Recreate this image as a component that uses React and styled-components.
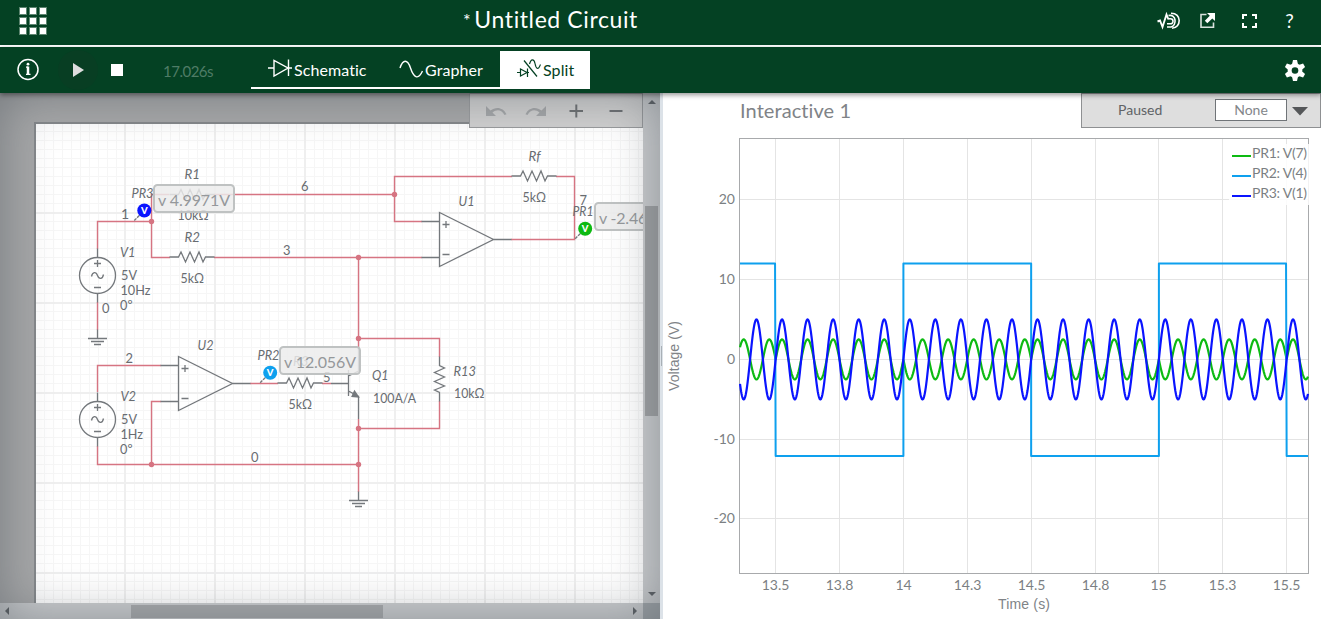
import React from "react";
import styled, { createGlobalStyle } from "styled-components";

const GREEN = "#044123";
const WIRE = "#d67482";
const INK = "#74787c";

const GlobalStyle = createGlobalStyle`
  * { box-sizing: border-box; }
  body { margin: 0; overflow: hidden; font-family: Lato, "Liberation Sans", sans-serif; background: #fff; }
`;

const Page = styled.div`
  width: 1321px;
  height: 619px;
  display: flex;
  flex-direction: column;
  overflow: hidden;
`;

const Header = styled.header`
  flex: 0 0 47px;
  display: grid;
  grid-template-columns: 1fr auto 1fr;
  background: ${GREEN};
  border-bottom: 2px solid #fff;
  color: #fff;
`;

const AppsGrid = styled.div`
  display: grid;
  grid-template-columns: repeat(3, 8px);
  grid-auto-rows: 8px;
  gap: 2px;
  padding: 7px 0 0 19px;
`;

const AppDot = styled.span`
  background: #fff;
  border: 1px solid #5d8570;
`;

const Title = styled.h1`
  margin: 0;
  padding: 5px 220px 0 0;
  font-size: 23px;
  font-weight: 400;
  line-height: 28px;
  letter-spacing: 0.6px;
  white-space: pre;
  justify-self: center;
  display: flex;
  gap: 3px;
`;

const Star = styled.span`
  font-size: 18px;
  line-height: 30px;
`;

const HeaderActions = styled.div`
  display: flex;
  justify-content: flex-end;
  padding: 11px 23px 0 0;
  gap: 16px;
  height: 36px;
`;

const Toolbar = styled.nav`
  flex: 0 0 46px;
  display: flex;
  align-items: stretch;
  background: ${GREEN};
  color: #fff;
  position: relative;
  z-index: 2;
  box-shadow: 0 2px 5px rgba(0, 0, 0, 0.42);
`;

const Controls = styled.div`
  width: 251px;
  display: flex;
  align-items: center;
`;

const Elapsed = styled.span`
  font-size: 15px;
  letter-spacing: -0.5px;
  color: #4f7c66;
  margin-left: 12px;
  padding-top: 1px;
`;

const Tabs = styled.div`
  display: flex;
  margin: 4px 0;
`;

const Tab = styled.button`
  width: ${(p) => p.$width}px;
  padding: 0 0 0 ${(p) => p.$inset}px;
  display: flex;
  align-items: center;
  gap: 2px;
  border: 0;
  border-bottom: 2px solid #fff;
  background: ${(p) => (p.$active ? "#fff" : "transparent")};
  color: ${(p) => (p.$active ? GREEN : "#fff")};
  font: 400 16px/20px Lato, sans-serif;
  letter-spacing: 0.08px;
  span { padding-top: 1px; }
`;

const Settings = styled.div`
  margin-left: auto;
  padding: 12px 14.5px 0 0;
`;

const Main = styled.main`
  flex: 1;
  display: flex;
  min-height: 0;
`;

const SchematicPane = styled.section`
  width: 660px;
  display: grid;
  grid-template-columns: 643px 17px;
  grid-template-rows: 510px 16px;
  background: #a6a7a8;
  position: relative;
  &::after {
    content: "";
    position: absolute;
    inset: 0;
    box-shadow: inset 0 0 50px rgba(62, 70, 78, 0.47);
    pointer-events: none;
  }
`;

const CanvasArea = styled.div`
  position: relative;
  overflow: hidden;
  svg { display: block; }
`;

const CanvasTools = styled.div`
  position: absolute;
  top: 0;
  right: 0;
  width: 174px;
  height: 35px;
  background: #cfcfcf;
  border: 1px solid #999b9d;
  display: flex;
  gap: 16px;
  padding: 5px 0 0 14px;
`;

const VScroll = styled.div`
  background: #cbcdcf;
  display: flex;
  flex-direction: column;
  align-items: center;
  justify-content: space-between;
  padding: 6px 0 5px;
`;

const HScroll = styled.div`
  background: #cbcdcf;
  display: flex;
  align-items: center;
  justify-content: space-between;
  padding: 0 6px 0 4px;
`;

const VThumb = styled.div`
  width: 13px;
  height: 210px;
  background: #a0a2a4;
  margin-top: -75px;
`;

const HThumb = styled.div`
  width: 252px;
  height: 13px;
  background: #a8aaac;
  margin-left: -127px;
`;

const Corner = styled.div`
  background: #a2a7ab;
`;

const Divider = styled.div`
  width: 3px;
  background: #dce2e8;
  padding: 253px 0 0 1px;
  &::before {
    content: "";
    display: block;
    width: 1px;
    height: 20px;
    background: #a9b0b6;
  }
`;

const GrapherPane = styled.section`
  flex: 1;
  display: flex;
  flex-direction: column;
`;

const GrapherHead = styled.div`
  height: 35px;
  display: flex;
  justify-content: space-between;
  padding-left: 77px;
`;

const GraphTitle = styled.h2`
  margin: 0;
  padding-top: 4px;
  font-size: 20px;
  line-height: 26px;
  font-weight: 400;
  letter-spacing: 0.08px;
  color: #808387;
`;

const StatusBar = styled.div`
  width: 240px;
  height: 35px;
  background: #dedede;
  border: 1px solid #8e9092;
  display: flex;
  align-items: center;
`;

const StatusText = styled.span`
  width: 133px;
  padding-left: 36px;
  font-size: 14px;
  line-height: 18px;
  margin-top: -1px;
  color: #606366;
`;

const Select = styled.div`
  width: 72px;
  height: 22px;
  margin-top: -2px;
  background: #fff;
  border: 1px solid #707478;
  text-align: center;
  font-size: 14px;
  line-height: 20px;
  color: #83868a;
`;

const Caret = styled.svg`
  margin-left: 4px;
`;

/* ---------- schematic symbols ---------- */

const Label = ({ x, y, w, i, children }) => (
  <text
    x={x}
    y={y}
    fontStyle={i ? "italic" : "normal"}
    textLength={w}
    lengthAdjust="spacingAndGlyphs"
  >
    {children}
  </text>
);

const Resistor = ({ x, y, vertical }) => (
  <path
    transform={`translate(${x} ${y})${vertical ? " rotate(90)" : ""}`}
    d="M-22.5 0H-13.5L-11 -5L-6.5 5L-2 -5L2.5 5L7 -5L11 5L13.5 0H22.5"
  />
);

const Source = ({ x, y }) => (
  <g transform={`translate(${x} ${y})`}>
    <circle r="18" />
    <path d="M0 -27V-18M0 18V27M-3.5 -12H3.5M0 -15.5V-8.5M-3.5 12H3.5" />
    <path d="M-6 1C-5 -4 -1.500 -4 0 0S5 4 6 -1" />
  </g>
);

const OpAmp = ({ x, y }) => (
  <path
    transform={`translate(${x} ${y})`}
    d="M0 -27V27L54 0ZM-18 -18H0M-18 18H0M54 0H72M3 -15H10M6.5 -18.5V-11.5M3 15H10"
  />
);

const Ground = ({ x, y }) => (
  <path transform={`translate(${x} ${y})`} d="M0 -9V0M-9.5 0H9.5M-6.5 3H6.5M-3.5 6H3.5" />
);

const Probe = ({ x, y, color }) => (
  <g>
    <path d={`M${x - 10} ${y + 10}L${x - 4} ${y + 4}`} stroke={INK} strokeWidth="1.4" strokeDasharray="3 1" fill="none" />
    <circle cx={x} cy={y} r="7" fill={color} />
    <text x={x} y={y + 3.3} fill="#fff" fontSize="9.5" fontWeight="900" textAnchor="middle">V</text>
  </g>
);

const Readout = ({ x, y, children, w = 72 }) => (
  <g>
    <rect x={x + 1} y={y + 1} width="80" height="27" rx="3.5" fill="#ececec" fillOpacity="0.84" stroke="#bfc2c2" strokeWidth="2" />
    <text x={x + 5} y={y + 21.5} fontSize="16" fill="#95989b" textLength={w} lengthAdjust="spacing">{children}</text>
  </g>
);

const nodes = [
  [151.5, 221.5], [394.5, 194.5], [358.5, 257.5], [358.5, 338.5],
  [358.5, 428.5], [358.5, 464.5], [151.5, 464.5],
];

const Schematic = () => (
  <svg width="643" height="510" viewBox="0 93 643 510">
    <defs>
      <pattern id="minor" x="35" y="122" width="9" height="9" patternUnits="userSpaceOnUse">
        <path d="M0.5 0V9M0 0.5H9" stroke="#f6f6f6" />
      </pattern>
      <pattern id="major" x="34" y="122" width="90" height="90" patternUnits="userSpaceOnUse">
        <path d="M1 0V90M0 1H90" stroke="#efefef" strokeWidth="2" />
      </pattern>
    </defs>
    <rect x="34" y="122" width="620" height="500" fill="#fff" />
    <rect x="36" y="124" width="620" height="500" fill="url(#minor)" />
    <rect x="36" y="124" width="620" height="500" fill="url(#major)" />
    <path d="M35 604V123H650" fill="none" stroke="#85888b" strokeWidth="2" />
    <g fill="none" stroke={WIRE} strokeWidth="1.4">
      <path d="M97.5 249V221.5H151.5M169 194.5H151.5V257.5H170M214 194.5H394.5M512 176.5H394.5V221.5H422" />
      <path d="M214 257.5H422M511 239.5H574.5V176.5H556M97.5 302V330M358.5 257.5V347M358.5 338.5H439.5V357" />
      <path d="M439.5 401V428.5H358.5M358.5 419V492M97.5 392V365.5H161M97.5 446V464.5H358.5M151.5 464.5V401.5H161M250 383.5H278M322 383.5H331" />
    </g>
    <g fill={WIRE}>{nodes.map(([x, y]) => <circle key={`${x}-${y}`} cx={x} cy={y} r="2.7" />)}</g>
    <g fill="none" stroke={INK} strokeWidth="1.3">
      <Resistor x={192} y={194.5} />
      <Resistor x={192} y={257} />
      <Resistor x={534} y={176} />
      <Resistor x={300} y={383} />
      <Resistor x={439.5} y={379} vertical />
      <Source x={97.5} y={275.5} />
      <Source x={97.5} y={419.5} />
      <OpAmp x={439.5} y={239.5} />
      <OpAmp x={178.5} y={383.5} />
      <Ground x={97.5} y={338.5} />
      <Ground x={358.5} y={500.5} />
      <path d="M331 383.5H348.5M348.5 370V396M348.5 376L358.5 371V347M348.5 391L358.5 396.5V419" />
      <path d="M352 396.500L354.500 391L358.500 397Z" fill={INK} />
    </g>
    <g fontSize="14" fill="#686c71">
      <Label x={184.5} y={179} w={15.5} i>R1</Label>
      <Label x={131.5} y={198} w={22} i>PR3</Label>
      <Label x={177.5} y={220} w={31}>10kΩ</Label>
      <Label x={184.5} y={242} w={15.5} i>R2</Label>
      <Label x={180.5} y={283} w={23.5}>5kΩ</Label>
      <Label x={120} y={257} w={15.5} i>V1</Label>
      <Label x={121} y={280} w={16}>5V</Label>
      <Label x={120.5} y={295} w={30}>10Hz</Label>
      <Label x={120} y={310} w={12.5}>0º</Label>
      <Label x={102} y={313} w={7.5}>0</Label>
      <Label x={121} y={219}>1</Label>
      <Label x={301} y={191} w={7.5}>6</Label>
      <Label x={283} y={255} w={7.5}>3</Label>
      <Label x={458.5} y={206} w={16} i>U1</Label>
      <Label x={528.5} y={161} w={12} i>Rf</Label>
      <Label x={522.5} y={202} w={23.5}>5kΩ</Label>
      <Label x={579.5} y={204.5} w={7.5}>7</Label>
      <Label x={572.5} y={216} w={21} i>PR1</Label>
      <Label x={197.5} y={350} w={16} i>U2</Label>
      <Label x={257.5} y={360} w={22} i>PR2</Label>
      <Label x={125.5} y={363} w={7.5}>2</Label>
      <Label x={120.5} y={401} w={15.5} i>V2</Label>
      <Label x={121} y={424} w={16}>5V</Label>
      <Label x={120.5} y={439} w={22.5}>1Hz</Label>
      <Label x={120} y={454} w={12.5}>0º</Label>
      <Label x={251} y={462} w={7.5}>0</Label>
      <Label x={323} y={381.5} w={7.5}>5</Label>
      <Label x={288.5} y={409} w={23.5}>5kΩ</Label>
      <Label x={293} y={366} w={15.5} i>R3</Label>
      <Label x={372} y={380} w={16.5} i>Q1</Label>
      <Label x={373} y={403} w={43}>100A/A</Label>
      <Label x={453.5} y={376} w={22.5} i>R13</Label>
      <Label x={454} y={398} w={30.5}>10kΩ</Label>
    </g>
    <Probe x={144.3} y={210.5} color="#0a14ff" />
    <Probe x={270.2} y={372.7} color="#0ea0ee" />
    <Probe x={585.2} y={228.7} color="#0dba12" />
    <Readout x={153} y={184}>v 4.9971V</Readout>
    <Readout x={279} y={346}>v 12.056V</Readout>
    <Readout x={594} y={202} w={77}>v -2.4641V</Readout>
  </svg>
);

/* ---------- chart ---------- */

const PX_PER_S = 255.5;
const X0 = 903.4;
const Y0 = 359.4;
const PX_PER_V = 8;
const tx = (t) => X0 + (t - 14) * PX_PER_S;
const vy = (v) => Y0 - v * PX_PER_V;

const T_START = 14 + (740 - X0) / PX_PER_S;
const T_END = 14 + (1308 - X0) / PX_PER_S;

const trace = (fn) => {
  const pts = [];
  for (let t = T_START; t <= T_END; t += 0.0015) pts.push(`${tx(t).toFixed(2)},${vy(fn(t)).toFixed(2)}`);
  return pts.join(" ");
};

const sine = (t) => 5 * Math.sin(2 * Math.PI * 10 * t);
const isHigh = (t) => t - Math.floor(t) < 0.5;
const pr1 = trace((t) => (isHigh(t) ? -0.5 : 0.5) * sine(t));
const pr3 = trace(sine);
const pr2 = `M740 ${vy(12)}H${tx(13.5) - 0.6}L${tx(13.5)} ${vy(-12.06)}H${tx(14)}V${vy(12)}H${tx(14.5)}V${vy(-12.06)}H${tx(15)}V${vy(12)}H${tx(15.5) - 0.6}L${tx(15.5)} ${vy(-12.06)}H1308`;

const xTicks = [[775, "13.5"], [839, "13.8"], [903, "14"], [967, "14.3"], [1031, "14.5"], [1095, "14.8"], [1158, "15"], [1222, "15.3"], [1286, "15.5"]];
const yTicks = [[199, "20"], [279, "10"], [359, "0"], [439, "-10"], [518, "-20"]];
const legend = [["#0dba12", "PR1: V(7)", 158], ["#0ea0ee", "PR2: V(4)", 178], ["#0a14ff", "PR3: V(1)", 198]];

const Chart = () => (
  <svg width="658" height="491" viewBox="663 128 658 491">
    <g stroke="#e4e4e4">
      {xTicks.map(([x]) => <path key={x} d={`M${x + 0.5} 139V573`} />)}
      {yTicks.map(([y]) => <path key={y} d={`M740 ${y + 0.5}H1308`} />)}
    </g>
    <rect x="739.5" y="138.5" width="569" height="435" fill="none" stroke="#a8aaac" />
    <g fill="none" strokeWidth="2.2" strokeLinejoin="round">
      <polyline points={pr1} stroke="#0dba12" />
      <path d={pr2} stroke="#0ea0ee" strokeWidth="2" />
      <polyline points={pr3} stroke="#0a14ff" />
    </g>
    <rect x="1229" y="144" width="80" height="61" fill="#fff" fillOpacity="0.85" />
    <g fontSize="14" fill="#7b7f83">
      {legend.map(([color, name, y]) => (
        <g key={name}>
          <path d={`M1232 ${y - 2}H1251`} stroke={color} strokeWidth="2" />
          <text x="1252" y={y} textLength="55">{name}</text>
        </g>
      ))}
      {xTicks.map(([x, s]) => <text key={s} x={x + 0.6} y="590.3" textAnchor="middle">{s}</text>)}
      {yTicks.map(([y, s]) => <text key={s} x="735" y={y + 5.3} textAnchor="end">{s}</text>)}
    </g>
    <g fontFamily='"Liberation Sans", Arial, sans-serif' fontSize="14" fill="#808387">
      <text x="998" y="609" textLength="52">Time (s)</text>
      <text transform="translate(679 391) rotate(-90)" textLength="70">Voltage (V)</text>
    </g>
  </svg>
);

/* ---------- icons ---------- */

const Icon = ({ size = 24, w, children }) => (
  <svg width={w || size} height={size} viewBox={`0 0 ${w || size} ${size}`} fill="none" stroke="currentColor">
    {children}
  </svg>
);

const SoundWaveIcon = () => (
  <Icon size={20} w={26}>
    <path d="M0.500 10.500L3 9.500L5.500 16L9.500 3.500L11.500 8.500" strokeWidth="1.9" />
    <path d="M11.500 7.800H13.500A2.400 2.400 0 0 1 13.500 12.800H10" strokeWidth="1.600" />
    <path d="M11.500 4.600C19.500 2.500 20 14.500 14 16H10" strokeWidth="1.600" />
    <path d="M14 2.200C25 2 24.500 17 15 17.200" strokeWidth="1.600" />
  </Icon>
);

const OpenIcon = () => (
  <Icon size={20} w={25}>
    <path d="M7.500 3.500H2V16.300H14.500V11.500" strokeWidth="1.6" opacity="0.85" />
    <path d="M8 2H16V10L13.300 7.400L8.300 12.300L5.800 9.800L10.800 4.800Z" fill="currentColor" stroke="none" />
  </Icon>
);

const FullscreenIcon = () => (
  <Icon size={20} w={25}>
    <path d="M7 4H3V8M12 4H16V8M7 16H3V12M12 16H16V12" strokeWidth="2" />
  </Icon>
);

const HelpMark = styled.span`
  width: 17px;
  font-size: 19px;
  line-height: 20px;
  text-align: center;
`;

const DiodeIcon = () => (
  <Icon w={24} size={24}>
    <path d="M0 11H6M6 3.500V19L20 11ZM20.500 2.500V19M20 11H24" strokeWidth="1.4" />
  </Icon>
);

const SineIcon = () => (
  <Icon w={24} size={24}>
    <path d="M1 11C4 2 8.500 2 11.500 11S19 24 23.500 14" strokeWidth="1.4" />
  </Icon>
);

const SplitIcon = () => (
  <Icon w={24} size={24}>
    <path d="M0 15.500H3.500M3.500 12V19L10 15.500ZM10.500 11.500V20M10 15.500H12M7 3.500L20 19.500" strokeWidth="1.2" />
    <path d="M12.500 7C14 1.500 17 1.500 18 6.500S21 14 23.500 7.500" strokeWidth="1.2" />
  </Icon>
);

const GearIcon = () => (
  <svg width="24" height="24" viewBox="0 0 24 24">
    <g transform="translate(12 11.500)" fill="#fff">
      {[0, 60, 120].map((a) => (
        <path key={a} transform={`rotate(${a})`} d="M-2 -10.500H2L3 -6V6L2 10.500H-2L-3 6V-6Z" />
      ))}
      <circle r="7.300" />
      <circle r="3.300" fill={GREEN} />
    </g>
  </svg>
);

const ArrowGlyph = ({ d }) => (
  <svg width="8" height="8" viewBox="0 0 8 8"><path d={d} fill="#5e6266" /></svg>
);

export default function App() {
  return (
    <Page>
      <GlobalStyle />
      <Header>
        <AppsGrid>{Array.from({ length: 9 }, (_, i) => <AppDot key={i} />)}</AppsGrid>
        <Title><Star>*</Star>Untitled Circuit</Title>
        <HeaderActions>
          <SoundWaveIcon />
          <OpenIcon />
          <FullscreenIcon />
          <HelpMark>?</HelpMark>
        </HeaderActions>
      </Header>
      <Toolbar>
        <Controls>
          <svg width="151" height="46" viewBox="0 0 151 46">
            <circle cx="28" cy="22.500" r="10" fill="none" stroke="#fff" strokeWidth="1.500" />
            <path d="M28 19.500V28" stroke="#fff" strokeWidth="2.500" fill="none" />
            <path d="M26 20.200H28M26 27.300H30.500" stroke="#fff" strokeWidth="1.200" fill="none" />
            <circle cx="28" cy="17.200" r="1.400" fill="#fff" />
            <circle cx="78" cy="23" r="20" fill="#083e23" />
            <path d="M73 16V30L84 23Z" fill="#dedede" />
            <rect x="111" y="17" width="12" height="12" fill="#fff" />
          </svg>
          <Elapsed>17.026s</Elapsed>
        </Controls>
        <Tabs>
          <Tab $width={132} $inset={17}><DiodeIcon /><span>Schematic</span></Tab>
          <Tab $width={117} $inset={16}><SineIcon /><span>Grapher</span></Tab>
          <Tab $width={90} $inset={17} $active><SplitIcon /><span>Split</span></Tab>
        </Tabs>
        <Settings>
          <GearIcon />
        </Settings>
      </Toolbar>
      <Main>
        <SchematicPane>
          <CanvasArea>
            <Schematic />
            <CanvasTools>
              <Icon><path d="M2 7V17H12L8.500 13.500C13 9.500 18 11 20.500 16L22.500 15.300C19.500 8.500 12 7 6.500 11.500Z" fill="#a4a6a8" stroke="none" /></Icon>
              <Icon><path d="M22 7V17H12L15.500 13.500C11 9.500 6 11 3.500 16L1.500 15.300C4.500 8.500 12 7 17.500 11.500Z" fill="#a4a6a8" stroke="none" /></Icon>
              <Icon><path d="M5.500 12H19M12.300 5.500V18.500" stroke="#6d7073" strokeWidth="2" /></Icon>
              <Icon><path d="M5.500 12H18.500" stroke="#6d7073" strokeWidth="2" /></Icon>
            </CanvasTools>
          </CanvasArea>
          <VScroll>
            <ArrowGlyph d="M0 5L4 1L8 5Z" />
            <VThumb />
            <ArrowGlyph d="M0 2L4 6L8 2Z" />
          </VScroll>
          <HScroll>
            <ArrowGlyph d="M5 0L1 4L5 8Z" />
            <HThumb />
            <ArrowGlyph d="M4 0L8 4L4 8Z" />
          </HScroll>
          <Corner />
        </SchematicPane>
        <Divider />
        <GrapherPane>
          <GrapherHead>
            <GraphTitle>Interactive 1</GraphTitle>
            <StatusBar>
              <StatusText>Paused</StatusText>
              <Select>None</Select>
              <Caret width="18" height="10" viewBox="0 0 18 10"><path d="M1 1H17L9 9.500Z" fill="#555759" /></Caret>
            </StatusBar>
          </GrapherHead>
          <Chart />
        </GrapherPane>
      </Main>
    </Page>
  );
}
